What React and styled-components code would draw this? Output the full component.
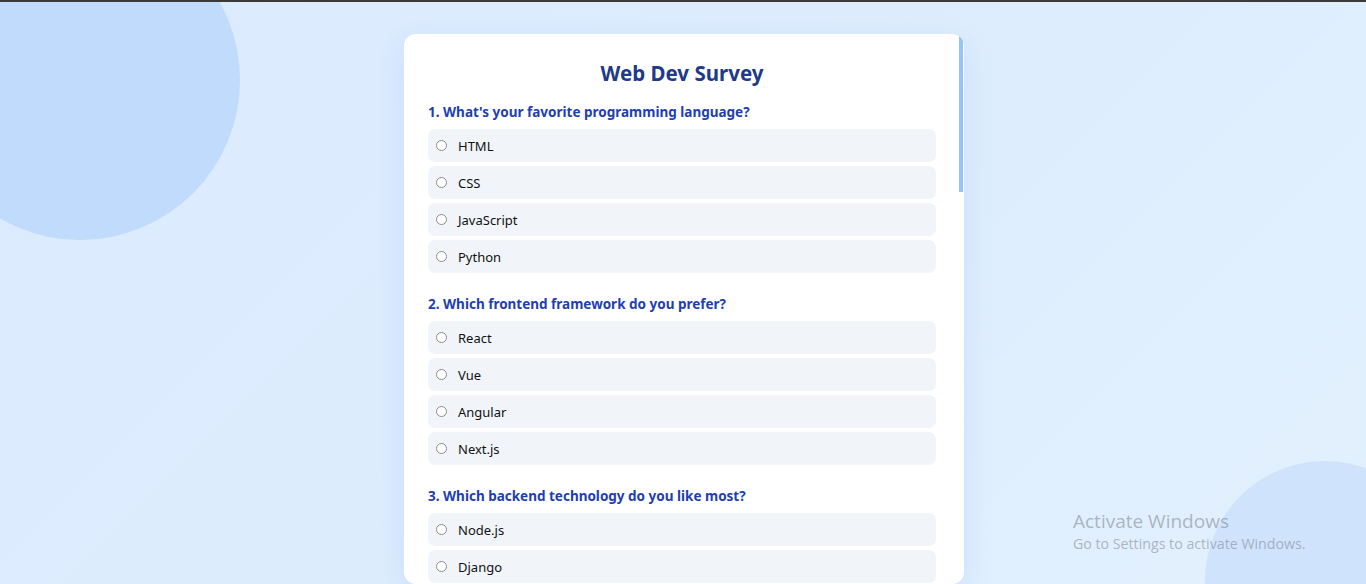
import React from 'react';
import styled, { createGlobalStyle } from 'styled-components';

const GlobalStyle = createGlobalStyle`
  html, body {
    margin: 0;
    padding: 0;
    height: 100%;
    overflow: hidden;
  }
  body {
    font-family: "Noto Sans", "Open Sans", "Liberation Sans", sans-serif;
    background: linear-gradient(135deg, #dbeafe 0%, #deedfd 60%, #e3f1fe 100%);
  }
`;

const TopEdge = styled.div`
  height: 2px;
  background: #3a3a3a;
`;

const Page = styled.main`
  position: relative;
  height: calc(100vh - 2px);
  display: flex;
  justify-content: center;
  padding: 32px 0 0 2px;
  box-sizing: border-box;
  overflow: hidden;
`;

const Blob = styled.div`
  position: absolute;
  border-radius: 50%;
  background: ${(p) => p.$color};
  width: ${(p) => p.$size}px;
  height: ${(p) => p.$size}px;
  left: ${(p) => p.$x}px;
  top: ${(p) => p.$y}px;
  pointer-events: none;
`;

const CardFrame = styled.div`
  position: relative;
  z-index: 1;
  width: 560px;
  height: 550px;
  background: #ffffff;
  border-radius: 12px;
  box-shadow: 0 10px 30px rgba(59, 130, 246, 0.12);
  overflow: hidden;
`;

const Card = styled.section`
  height: 100%;
  box-sizing: border-box;
  padding: 24px 28px 24px 24px;
  overflow-y: auto;
  scrollbar-width: none;

  &::-webkit-scrollbar {
    display: none;
  }
`;

const ScrollThumb = styled.div`
  position: absolute;
  top: 0;
  right: 1px;
  width: 4px;
  height: 158px;
  background: #93c5fd;
`;

const Title = styled.h1`
  margin: 0 0 16px;
  text-align: center;
  font-size: 20.5px;
  line-height: 30px;
  font-weight: 700;
  color: #1e3a8a;
`;

const Question = styled.fieldset`
  border: 0;
  margin: 0 0 23px;
  padding: 0;
  min-width: 0;
  display: flex;
  flex-direction: column;
  gap: 4px;
`;

const Prompt = styled.legend`
  padding: 0;
  margin: 0 0 8px;
  font-size: 13.5px;
  line-height: 17px;
  font-weight: 700;
  color: #1e40af;
`;

const Option = styled.label`
  display: flex;
  align-items: center;
  gap: 11px;
  height: 33px;
  padding: 0 8px;
  background: #f1f5f9;
  border-radius: 7px;
  font-size: 13px;
  color: #111;
  cursor: pointer;
`;

const Radio = styled.input.attrs({ type: 'radio' })`
  appearance: none;
  margin: 0;
  width: 11px;
  height: 11px;
  border: 1px solid #8c8c8c;
  border-radius: 50%;
  background: #fff;
  flex-shrink: 0;

  &:checked {
    border-color: #2563eb;
    box-shadow: inset 0 0 0 2px #fff;
    background: #2563eb;
  }
`;

const Submit = styled.button`
  display: block;
  width: 100%;
  height: 40px;
  border: 0;
  border-radius: 8px;
  background: #2563eb;
  color: #fff;
  font-family: inherit;
  font-size: 15px;
  font-weight: 700;
`;

const Watermark = styled.div`
  position: absolute;
  left: 1073px;
  top: 506px;
  z-index: 2;
  font-family: "Open Sans", "Noto Sans", sans-serif;
  color: rgba(120, 130, 140, 0.55);
  pointer-events: none;
`;

const WatermarkTitle = styled.div`
  font-size: 19px;
  line-height: 26px;
`;

const WatermarkText = styled.div`
  font-size: 14.2px;
  line-height: 20px;
`;

const questions = [
  { q: "What's your favorite programming language?", a: ['HTML', 'CSS', 'JavaScript', 'Python'] },
  { q: 'Which frontend framework do you prefer?', a: ['React', 'Vue', 'Angular', 'Next.js'] },
  { q: 'Which backend technology do you like most?', a: ['Node.js', 'Django', 'Laravel', 'Spring Boot'] },
  { q: 'Which database do you use most often?', a: ['MongoDB', 'MySQL', 'PostgreSQL', 'Firebase'] },
  { q: 'Which CSS framework do you prefer?', a: ['Tailwind CSS', 'Bootstrap', 'Material UI', 'Bulma'] },
  { q: 'Which code editor do you use?', a: ['VS Code', 'WebStorm', 'Sublime Text', 'Vim'] },
  { q: 'Where do you host your code?', a: ['GitHub', 'GitLab', 'Bitbucket', 'Other'] },
  { q: 'Where do you deploy your projects?', a: ['Vercel', 'Netlify', 'AWS', 'Heroku'] },
  { q: 'What is your experience level?', a: ['Beginner', 'Intermediate', 'Advanced', 'Expert'] }
];

export default function App() {
  return (
    <>
      <GlobalStyle />
      <TopEdge />
      <Page>
        <Blob $color="#c0dbfc" $size={320} $x={-80} $y={-82} />
        <Blob $color="#cfe4fc" $size={240} $x={1205} $y={459} />
        <CardFrame>
          <Card>
            <Title>Web Dev Survey</Title>
            <form onSubmit={(e) => e.preventDefault()}>
              {questions.map((item, i) => (
                <Question key={item.q}>
                  <Prompt>
                    {i + 1}. {item.q}
                  </Prompt>
                  {item.a.map((ans) => (
                    <Option key={ans}>
                      <Radio name={`q${i}`} value={ans} />
                      {ans}
                    </Option>
                  ))}
                </Question>
              ))}
              <Submit type="submit">Submit</Submit>
            </form>
          </Card>
          <ScrollThumb />
        </CardFrame>
        <Watermark>
          <WatermarkTitle>Activate Windows</WatermarkTitle>
          <WatermarkText>Go to Settings to activate Windows.</WatermarkText>
        </Watermark>
      </Page>
    </>
  );
}
